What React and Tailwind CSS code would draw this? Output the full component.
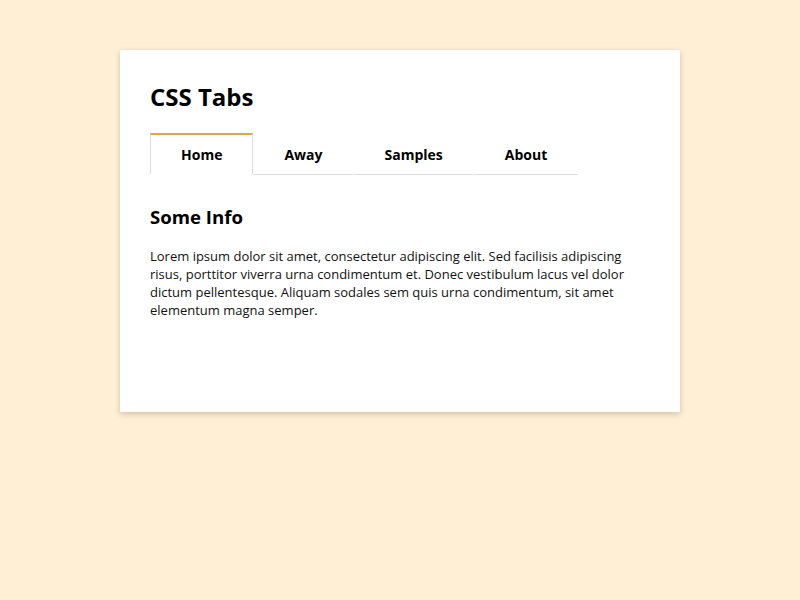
export default function App() {
  const tabs = ["Home", "Away", "Samples", "About"];
  return (
    <div className="min-h-[600px] w-full bg-[#ffefd5] pt-[50px]" style={{ fontFamily: '"Open Sans", sans-serif' }}>
      <div className="mx-auto w-[560px] h-[362px] bg-white px-[30px] pt-[29px] shadow-[0_2px_6px_rgba(0,0,0,0.2)]">
        <h1 className="text-[24px] font-bold leading-[36px] text-black">CSS Tabs</h1>
        <div className="mt-[18px] flex">
          {tabs.map((t, i) => (
            <div
              key={t}
              className={
                i === 0
                  ? "h-[42px] flex items-center justify-center px-[30px] border-t-2 border-b border-x border-t-[#eba23c] border-x-[#dddddd] border-b-white text-[14px] font-bold text-black"
                  : "h-[42px] flex items-center justify-center px-[30px] border-t-2 border-b border-x border-t-transparent border-x-transparent border-b-[#dddddd] text-[14px] font-bold text-black"
              }
            >
              {t}
            </div>
          ))}
        </div>
        <h2 className="mt-[28px] text-[18.6px] font-bold leading-[28px] text-black">Some Info</h2>
        <p className="mt-[16px] text-[13px] leading-[18px] text-[#111]">
          Lorem ipsum dolor sit amet, consectetur adipiscing elit. Sed facilisis adipiscing risus, porttitor viverra urna condimentum et. Donec vestibulum lacus vel dolor dictum pellentesque. Aliquam sodales sem quis urna condimentum, sit amet elementum magna semper.
        </p>
      </div>
    </div>
  );
}
